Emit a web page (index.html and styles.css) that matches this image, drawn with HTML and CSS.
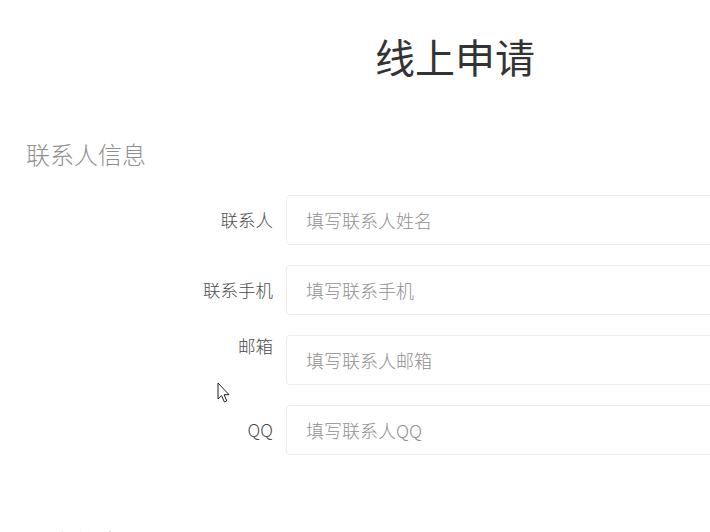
FILE: index.html
```html
<!DOCTYPE html>
<html lang="zh-CN">
<head>
<meta charset="utf-8">
<title>线上申请</title>
<link rel="stylesheet" href="styles.css">
</head>
<body>
<div class="page">
  <h1 class="title">线上申请</h1>
  <section class="section">
    <h2 class="section-title">联系人信息</h2>
    <div class="form">
      <div class="row">
        <label class="label">联系人</label>
        <input class="input" type="text" placeholder="填写联系人姓名">
      </div>
      <div class="row">
        <label class="label">联系手机</label>
        <input class="input" type="text" placeholder="填写联系手机">
      </div>
      <div class="row row-top">
        <label class="label">邮箱</label>
        <input class="input" type="text" placeholder="填写联系人邮箱">
      </div>
      <div class="row">
        <label class="label">QQ</label>
        <input class="input" type="text" placeholder="填写联系人QQ">
      </div>
    </div>
  </section>
  <section class="section">
    <h2 class="section-title next">基本信息</h2>
  </section>
  <svg class="cursor" width="14" height="22" viewBox="0 0 14 22">
    <path d="M1 1 L1 17 L4.6 13.6 L7.4 20 L9.8 19 L7.1 12.7 L12 12.7 Z" fill="#fff" stroke="#222" stroke-width="1" stroke-linejoin="round"/>
  </svg>
</div>
</body>
</html>
```
FILE: styles.css
```css
html, body {
  margin: 0;
  padding: 0;
  background: #fff;
  overflow: hidden;
}
body {
  font-family: "Noto Sans CJK SC", "Noto Sans", sans-serif;
  color: #333;
}
.page {
  position: relative;
  width: 910px;
  padding-top: 36px;
}
.title {
  margin: 0;
  font-size: 40px;
  line-height: 40px;
  font-weight: 400;
  text-align: center;
  color: #333;
}
.section-title {
  margin: 66px 0 0 26px;
  font-size: 24px;
  line-height: 24px;
  font-weight: 300;
  color: #8e8e8e;
}
.section-title.next {
  margin-top: 75px;
}
.form {
  display: flex;
  flex-direction: column;
  gap: 20px;
  margin-top: 29px;
}
.row {
  display: grid;
  grid-template-columns: 273px 600px;
  column-gap: 13px;
  align-items: center;
}
.row-top {
  align-items: start;
}
.row-top .label {
  padding-top: 2px;
}
.label {
  text-align: right;
  font-size: 17.5px;
  line-height: 18px;
  color: #4a4a4a;
  font-weight: 300;
}
.input {
  box-sizing: border-box;
  height: 50px;
  width: 100%;
  border: 1px solid #ececec;
  border-radius: 4px;
  padding: 0 19px;
  font-family: inherit;
  font-size: 18px;
  font-weight: 300;
  color: #333;
  background: #fff;
  outline: none;
}
.input::placeholder {
  color: #8f8f8f;
}
.cursor {
  position: absolute;
  left: 217px;
  top: 382px;
}
```
